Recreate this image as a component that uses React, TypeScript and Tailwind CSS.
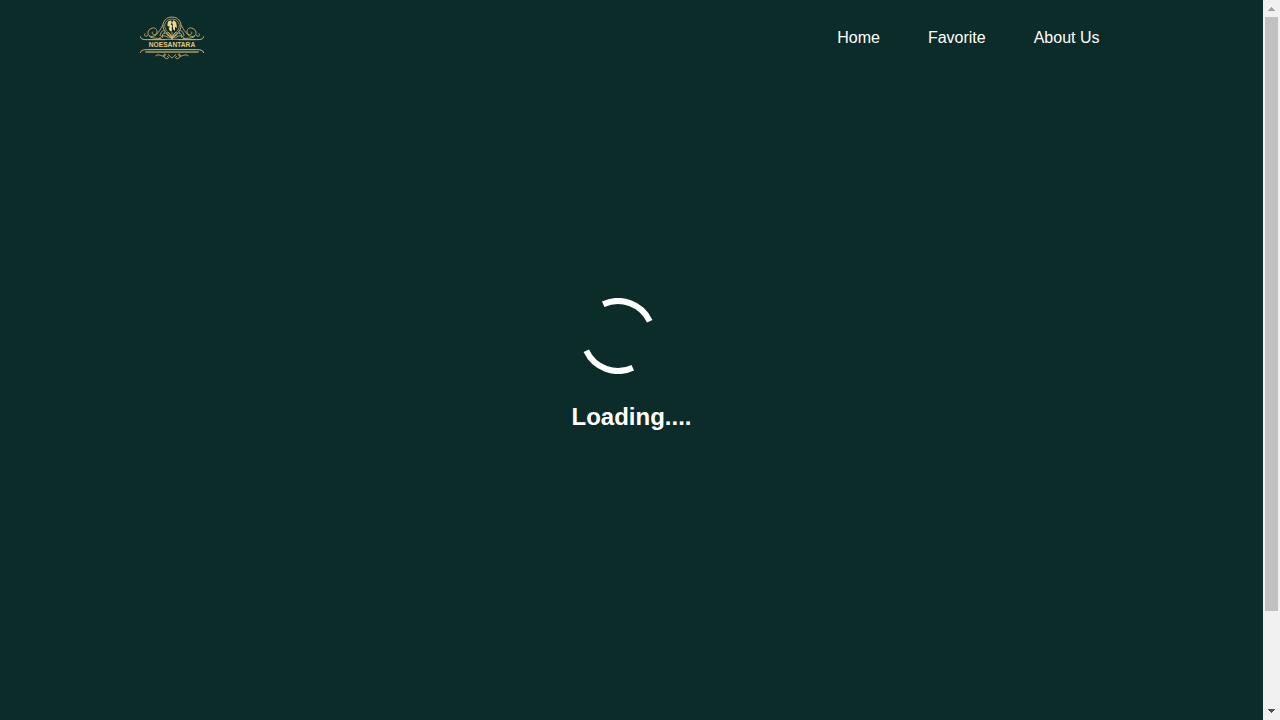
const links = ["Home", "Favorite", "About Us"];

function Ornament() {
  return (
    <g>
      <path d="M82 44C76 50 74 60 66 68C56 84 38 82 36 70C35 60 46 52 56 54C65 58 65 70 57 74C50 76 46 69 51 65" strokeWidth="2.4" />
      <path d="M36 76C28 82 22 76 28 70M40 78C44 86 62 84 76 86" strokeWidth="2.4" />
      <path d="M84 60C78 62 72 70 72 78M87 66C80 70 78 76 79 84M98 84C86 72 74 78 70 86M102 84C94 68 88 68 84 72M106 84C103 70 98 66 94 68" strokeWidth="2.4" />
      <path d="M13 79C14 87 20 89 34 89H88" strokeWidth="3" />
      <path d="M13 129C14 121 22 119 34 119H108" strokeWidth="3" />
      <path d="M28 126H108" strokeWidth="3.4" />
      <path d="M58 138C66 132 72 136 80 138C88 140 92 132 86 132C80 134 84 146 92 146C100 146 98 138 93 140M96 134C100 134 103 142 108 144" strokeWidth="2.4" />
    </g>
  );
}

function Logo() {
  return (
    <svg className="h-11 w-16" viewBox="12 18 192 132" fill="none" stroke="#dfbd78" role="img" aria-label="Noesantara">
      <Ornament />
      <g transform="translate(216 0) scale(-1 1)">
        <Ornament />
      </g>
      <path d="M88 66C72 46 84 21 108 21C132 21 144 46 128 66" strokeWidth="2.4" />
      <path d="M92 63C79 46 89 27 108 27C127 27 137 46 124 63" strokeWidth="2" />
      <path d="M88 64C96 74 102 78 108 86C114 78 120 74 128 64M94 65C101 70 105 76 108 84C111 76 115 70 122 65M108 66V88M86 88H130M92 74C100 76 104 82 108 88C112 82 116 76 124 74" strokeWidth="2.4" />
      <path d="M98 33C104 29 108 33 107 39L104 43L110 48L107 53L108 64L103 64L98 56L101 50L94 47L95 38ZM113 30L121 38L123 55L117 50L117 62L111 58L111 46L108 38Z" fill="#f5d68c" stroke="none" />
      <text x="108" y="112" textAnchor="middle" fill="#e6c681" stroke="none" fontSize="20" className="font-['Liberation_Sans',sans-serif] font-bold">
        NOESANTARA
      </text>
    </svg>
  );
}

function Spinner() {
  return (
    <svg className="m-2 size-[76px]" viewBox="0 0 76 76" fill="none" stroke="#fff" strokeWidth="6" aria-hidden="true">
      <g transform="rotate(20 38 38)">
        <path d="M13.25 13.25A35 35 0 0 1 62.75 13.25" />
        <path d="M62.75 62.75A35 35 0 0 1 13.25 62.75" />
      </g>
    </svg>
  );
}

function ScrollTrack() {
  return (
    <div className="flex w-[17px] shrink-0 flex-col items-center bg-[#f1f1f1]" aria-hidden="true">
      <svg className="size-[17px] shrink-0" viewBox="0 0 17 17" fill="#a3a3a3" shapeRendering="crispEdges">
        <path d="M8 7h1v1h1v1h1v1h1v1H5v-1h1V9h1V8h1z" />
      </svg>
      <div className="flex w-full grow flex-col px-0.5">
        <div className="basis-[86.6%] bg-[#c1c1c1]" />
      </div>
      <svg className="size-[17px] shrink-0" viewBox="0 0 17 17" fill="#505050" shapeRendering="crispEdges">
        <path d="M5 6h7v1h-1v1h-1v1H9v1H8V9H7V8H6V7H5z" />
      </svg>
    </div>
  );
}

export default function App() {
  return (
    <div className="flex min-h-screen bg-[#0c2c2a] font-['Liberation_Sans',Arial,sans-serif] text-white">
      <div className="flex min-w-0 grow flex-col">
        <header className="mx-auto flex w-full max-w-[984px] items-center justify-between py-4">
          <a href="#home">
            <Logo />
          </a>
          <nav className="flex">
            {links.map((label) => (
              <a key={label} href="#" className="px-6 text-base leading-6">
                {label}
              </a>
            ))}
          </nav>
        </header>
        <main className="flex grow items-center justify-center pb-[74px]">
          <div role="status" className="flex flex-col items-start gap-5">
            <Spinner />
            <h2 className="text-2xl leading-[30px] font-bold">Loading....</h2>
          </div>
        </main>
      </div>
      <ScrollTrack />
    </div>
  );
}
